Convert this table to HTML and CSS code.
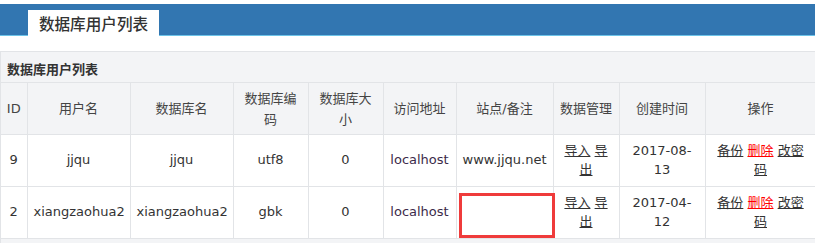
FILE: index.html
```html
<!DOCTYPE html>
<html lang="zh">
<head>
<meta charset="utf-8">
<title>数据库用户列表</title>
<link rel="stylesheet" href="styles.css">
</head>
<body>
<div class="topbar">
  <div class="tab">数据库用户列表</div>
</div>
<div class="panel">
  <div class="panel-heading">数据库用户列表</div>
  <table class="grid">
    <colgroup>
      <col class="c-id"><col class="c-user"><col class="c-db"><col class="c-enc"><col class="c-size"><col class="c-host"><col class="c-site"><col class="c-mgmt"><col class="c-time"><col class="c-ops">
    </colgroup>
    <thead>
      <tr>
        <th>ID</th><th>用户名</th><th>数据库名</th><th>数据库编码</th><th>数据库大小</th><th>访问地址</th><th>站点/备注</th><th>数据管理</th><th>创建时间</th><th>操作</th>
      </tr>
    </thead>
    <tbody>
      <tr>
        <td>9</td><td>jjqu</td><td>jjqu</td><td>utf8</td><td>0</td><td class="host">localhost</td><td>www.jjqu.net</td>
        <td><a href="#">导入</a> <a href="#">导出</a></td>
        <td>2017-08-13</td>
        <td><a href="#">备份</a> <a href="#" class="del">删除</a> <a href="#">改密码</a></td>
      </tr>
      <tr>
        <td>2</td><td>xiangzaohua2</td><td>xiangzaohua2</td><td>gbk</td><td>0</td><td class="host">localhost</td><td class="marked"><span class="redbox"></span></td>
        <td><a href="#">导入</a> <a href="#">导出</a></td>
        <td>2017-04-12</td>
        <td><a href="#">备份</a> <a href="#" class="del">删除</a> <a href="#">改密码</a></td>
      </tr>
    </tbody>
  </table>
  <div class="panel-footer"></div>
</div>
</body>
</html>
```

FILE: styles.css
```css
html, body {
  margin: 0;
  padding: 0;
  background: #fff;
  overflow: hidden;
}
body {
  width: 815px;
  font-family: "DejaVu Sans", "Noto Sans CJK SC", sans-serif;
  font-size: 13px;
  color: #333;
  padding-top: 4px;
}
.topbar {
  background: #3276b1;
  height: 31px;
  border-bottom: 1px solid #6cc3e8;
  display: flex;
  align-items: flex-end;
  padding-left: 28px;
}
.tab {
  background: #fff;
  width: 131px;
  height: 26px;
  line-height: 27px;
  text-align: center;
  font-family: "Noto Sans CJK SC", sans-serif;
  font-size: 15.6px;
  font-weight: 500;
  color: #333;
  margin-bottom: -1px;
}
.panel {
  margin-top: 15px;
  width: 830px;
  border-top: 1px solid #e2e4e7;
  border-left: 1px solid #e2e4e7;
  background: #f3f4f6;
}
.panel-heading {
  height: 30px;
  line-height: 34px;
  padding-left: 6px;
  font-family: "Noto Sans CJK SC", sans-serif;
  font-weight: bold;
  font-size: 13px;
  color: #333;
  border-bottom: 1px solid #e2e4e7;
}
.grid {
  border-collapse: collapse;
  table-layout: fixed;
  width: 815px;
  background: #fff;
}
.c-id { width: 26px; }
.c-user { width: 103px; }
.c-db { width: 103px; }
.c-enc { width: 75px; }
.c-size { width: 75px; }
.c-host { width: 73px; }
.c-site { width: 97px; }
.c-mgmt { width: 66px; }
.c-time { width: 86px; }
.c-ops { width: 111px; }
.grid th, .grid td {
  border: 1px solid #e2e4e7;
  text-align: center;
  vertical-align: middle;
  padding-left: 6px;
  padding-right: 6px;
}
.grid tr > :first-child { border-left: 0; }
.grid th {
  background: #f3f4f6;
  font-weight: normal;
  color: #444;
  height: 43px;
  line-height: 21px;
  padding-top: 4px;
  padding-bottom: 4px;
  border-top: 0;
}
.grid td {
  height: 40px;
  line-height: 19.5px;
  padding-top: 5px;
  padding-bottom: 6px;
  color: #333;
}
.grid td:first-child, .grid th:first-child {
  padding-left: 2px;
  padding-right: 2px;
}
.grid td.host { color: #3c2b4a; }
.grid a {
  color: #333;
  text-decoration: underline;
}
.grid a.del { color: #f00; }
.grid td.marked { position: relative; }
.redbox {
  position: absolute;
  left: 2px;
  top: 6px;
  width: 90px;
  height: 39px;
  border: 3px solid #ef3b3b;
}
.panel-footer {
  height: 10px;
  background: #f3f4f6;
}
```
